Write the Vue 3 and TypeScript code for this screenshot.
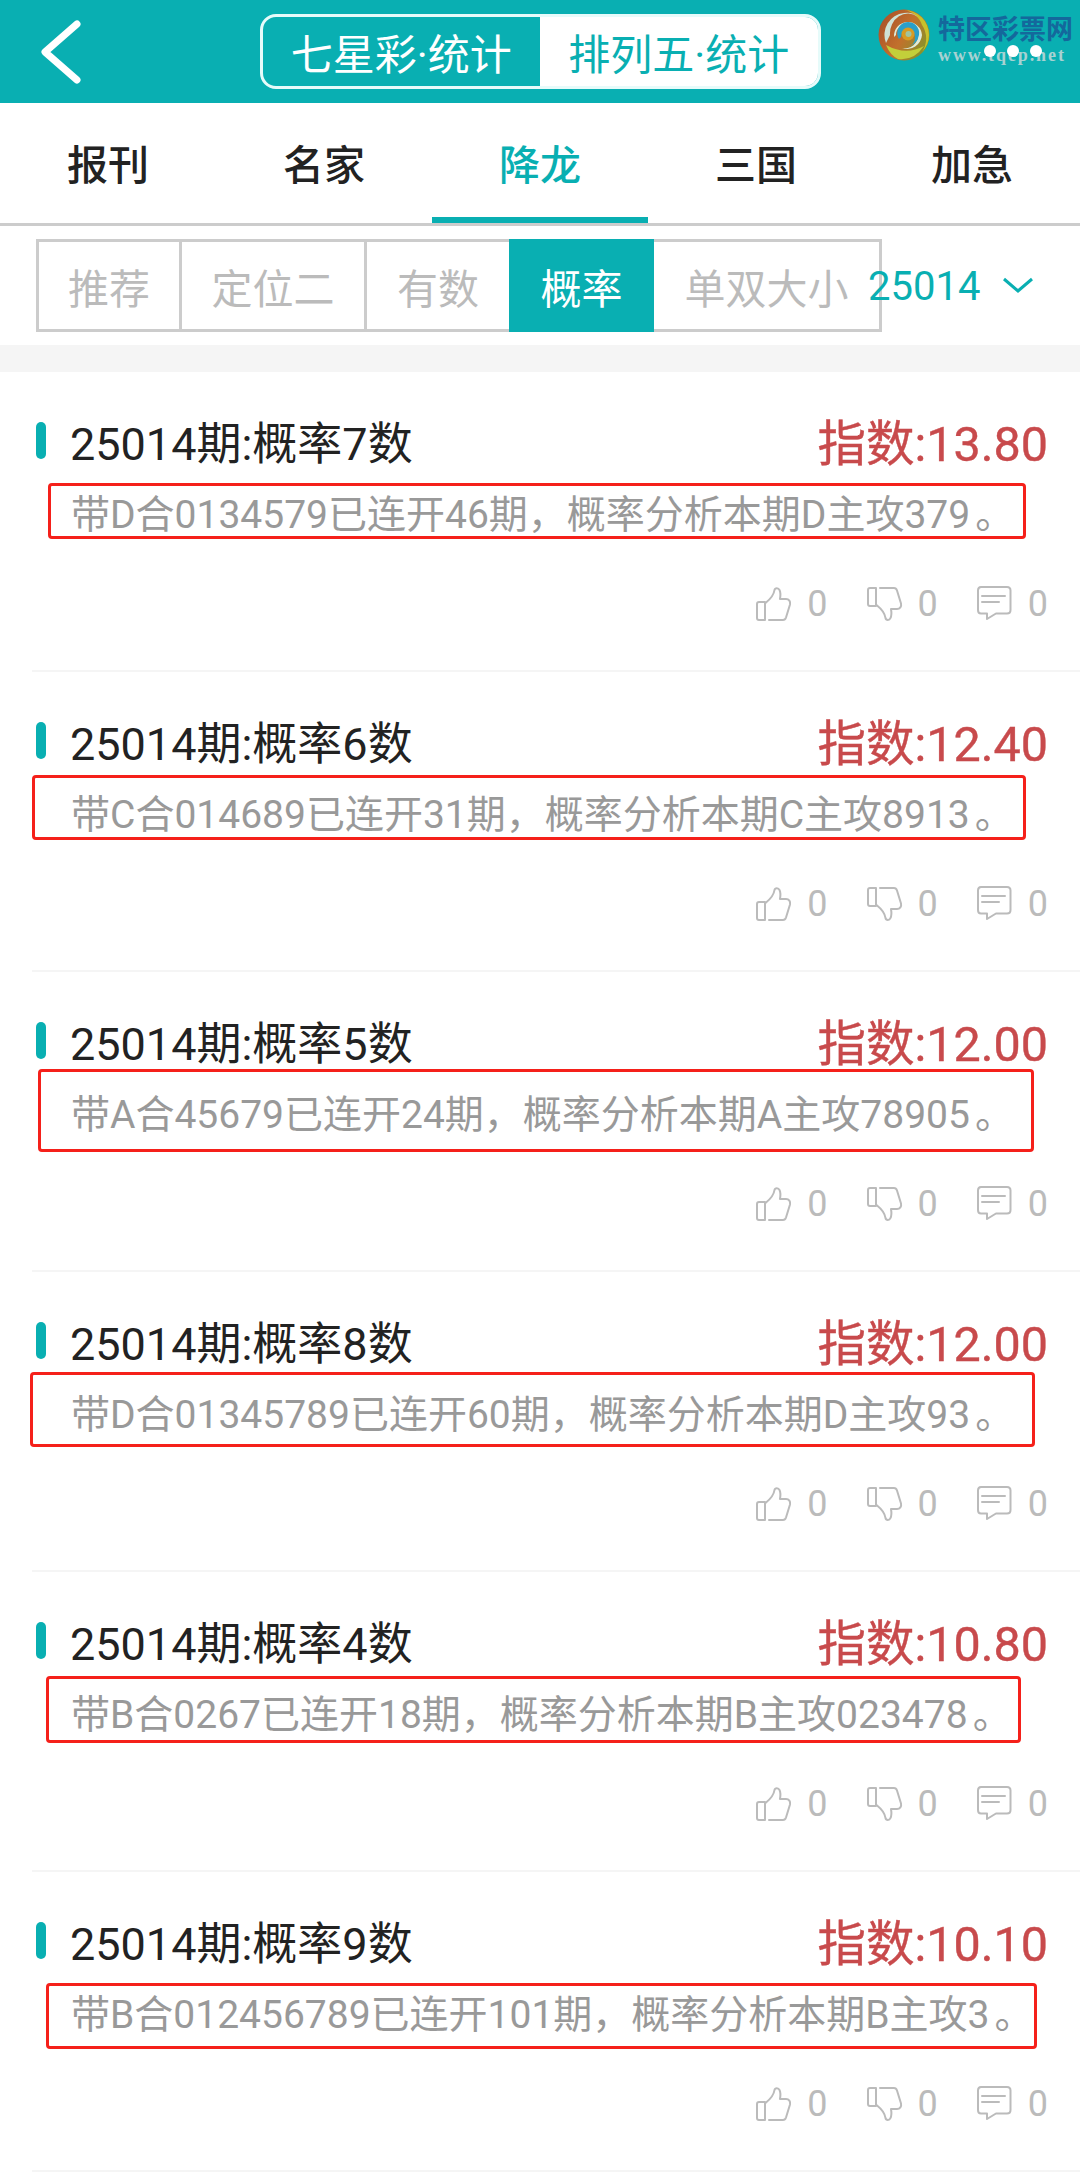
<script setup lang="ts">
interface Pick {
  count: number
  score: string
  text: string
  box: { left: number; top: number; width: number; height: number }
}

const tabs = ['报刊', '名家', '降龙', '三国', '加急']
const subTabs = [
  { label: '推荐', width: 146 },
  { label: '定位二', width: 188 },
  { label: '有数', width: 148 },
  { label: '概率', width: 145 },
  { label: '单双大小', width: 231 }
]

const picks: Pick[] = [
  { count: 7, score: '13.80', text: '带D合0134579已连开46期，概率分析本期D主攻379', box: { left: 16, top: 111, width: 978, height: 56 } },
  { count: 6, score: '12.40', text: '带C合014689已连开31期，概率分析本期C主攻8913', box: { left: 0, top: 103, width: 994, height: 65 } },
  { count: 5, score: '12.00', text: '带A合45679已连开24期，概率分析本期A主攻78905', box: { left: 6, top: 97, width: 996, height: 83 } },
  { count: 8, score: '12.00', text: '带D合01345789已连开60期，概率分析本期D主攻93', box: { left: -2, top: 100, width: 1005, height: 75 } },
  { count: 4, score: '10.80', text: '带B合0267已连开18期，概率分析本期B主攻023478', box: { left: 14, top: 104, width: 975, height: 67 } },
  { count: 9, score: '10.10', text: '带B合012456789已连开101期，概率分析本期B主攻3', box: { left: 14, top: 111, width: 991, height: 66 } }
]

function boxStyle(p: Pick) {
  return {
    left: p.box.left + 'px',
    top: p.box.top + 'px',
    width: p.box.width + 'px',
    height: p.box.height + 'px'
  }
}
</script>

<template>
  <div class="page">
    <header class="header">
      <svg class="back" width="46" height="72" viewBox="0 0 46 72">
        <path d="M39 8 L7 36 L39 64" fill="none" stroke="#fff" stroke-width="7" stroke-linecap="round" stroke-linejoin="round" />
      </svg>
      <div class="seg">
        <div class="seg-item">七星彩·统计</div>
        <div class="seg-item on">排列五·统计</div>
      </div>
      <!-- watermark logo -->
      <div class="logo">
        <svg width="52" height="52" viewBox="0 0 52 52">
          <defs>
            <linearGradient id="lg" x1="0" y1="0.2" x2="1" y2="0.8">
              <stop offset="0" stop-color="#a9512a" />
              <stop offset="0.5" stop-color="#c2702c" />
              <stop offset="1" stop-color="#7d9a2a" />
            </linearGradient>
          </defs>
          <circle cx="26" cy="26" r="25.500" fill="url(#lg)" />
          <path d="M26 1 A25 25 0 0 1 51 26 A25 25 0 0 1 44 43 A24 24 0 0 0 44 16 A22 22 0 0 0 26 1 Z" fill="#c9c12b" />
          <path d="M12 26 A18 20 0 0 1 40 8 A16 16 0 0 0 26 4 A22 22 0 0 0 8 34 Z" fill="#cfe2d6" />
          <path d="M16 28 A14 14 0 1 1 44 26 A15 15 0 0 1 24 39 A13 13 0 0 0 40 26 A11 11 0 1 0 18 26 Z" fill="#dfead8" />
          <path d="M21 30 A11 11 0 1 1 41 26 A14 14 0 0 1 28 38 A9 9 0 0 0 37 28 A7 7 0 1 0 23 28 Z" fill="#2a9fc8" />
          <circle cx="30" cy="25" r="6.500" fill="#d89b22" />
          <circle cx="30.500" cy="25" r="3" fill="#9fc4a0" />
          <path d="M8 36 Q28 47 46 37 Q36 52 20 50 Q12 46 8 36 Z" fill="#c3cf3a" />
        </svg>
        <div class="logo-text">
          <div class="logo-cn">特区彩票网</div>
          <div class="logo-url">www.tqep.net</div>
        </div>
        <div class="dots"><i></i><i></i><i></i></div>
      </div>
    </header>

    <nav class="tabs">
      <div v-for="t in tabs" :key="t" class="tab" :class="{ active: t === '降龙' }">{{ t }}</div>
    </nav>

    <div class="subbar">
      <div
        v-for="s in subTabs"
        :key="s.label"
        class="sub"
        :class="{ active: s.label === '概率' }"
        :style="{ width: s.width + 'px' }"
      >{{ s.label }}</div>
      <div class="issue">
        25014
        <svg width="32" height="16" viewBox="0 0 32 16" class="chev">
          <path d="M2 2 L16 14 L30 2" fill="none" stroke="#09afb2" stroke-width="3" />
        </svg>
      </div>
    </div>

    <div class="band"></div>

    <div class="list">
      <article v-for="p in picks" :key="p.count" class="item">
        <div class="head">
          <span class="bar"></span>
          <h3 class="title">25014期:概率{{ p.count }}数</h3>
          <span class="score">指数:{{ p.score }}</span>
        </div>
        <p class="desc">{{ p.text }}<span class="stop">。</span></p>
        <div class="stats">
          <span class="stat">
            <svg width="36" height="36" viewBox="0 0 36 36" class="ico">
              <path d="M13 34H27c1.500 0 2.500-1 3-2.500l4-13c.7-3-1-5.500-4-5.500h-6c.5-3 .5-7-.5-9-1-2.500-4.500-2.500-5 0-.5 4-4 9-9 13" />
              <path d="M9 16H3c-1.300 0-2 1-2 2v14c0 1.200 1 2 2 2h6V16z" />
            </svg>
            0
          </span>
          <span class="stat">
            <svg width="36" height="36" viewBox="0 0 36 36" class="ico flip">
              <path d="M13 34H27c1.500 0 2.500-1 3-2.500l4-13c.7-3-1-5.500-4-5.500h-6c.5-3 .5-7-.5-9-1-2.500-4.500-2.500-5 0-.5 4-4 9-9 13" />
              <path d="M9 16H3c-1.300 0-2 1-2 2v14c0 1.200 1 2 2 2h6V16z" />
            </svg>
            0
          </span>
          <span class="stat">
            <svg width="36" height="36" viewBox="0 0 36 36" class="ico">
              <path d="M4 1H30c2 0 3.500 1.500 3.500 3.500V24c0 2-1.500 3.500-3.500 3.500H19L10 33V27.500H4C2 27.500 1 26 1 24V4.500C1 2.500 2 1 4 1z" />
              <path d="M5 10H28M5 16H22" />
            </svg>
            0
          </span>
        </div>
        <div class="mark" :style="boxStyle(p)"></div>
      </article>
    </div>
  </div>
</template>

<style>
body {
  background: #fff;
}
</style>

<style scoped>
.page {
  width: 1080px;
  font-family: Roboto, "Noto Sans CJK SC", sans-serif;
  background: #fff;
  overflow: hidden;
}

.header {
  position: relative;
  height: 103px;
  background: #09afb2;
  display: flex;
  justify-content: center;
  align-items: flex-start;
  padding-top: 14px;
  box-sizing: border-box;
}

.back {
  position: absolute;
  left: 38px;
  top: 16px;
}

.seg {
  display: flex;
  width: 561px;
  height: 75px;
  box-sizing: border-box;
  border: 3px solid #e6fbfa;
  border-radius: 16px;
  overflow: hidden;
}

.seg-item {
  flex: 1;
  display: flex;
  align-items: center;
  justify-content: center;
  font-size: 42px;
  color: #fff;
}

.seg-item.on {
  background: #fff;
  color: #09afb2;
}

.logo {
  position: absolute;
  left: 878px;
  top: 9px;
  display: flex;
  gap: 8px;
}

.logo-cn {
  font-size: 27px;
  font-weight: 700;
  line-height: 30px;
  margin-top: 6px;
  color: #14689c;
  white-space: nowrap;
}

.logo-url {
  font-family: "Liberation Serif", serif;
  font-size: 18px;
  font-weight: 700;
  line-height: 20px;
  letter-spacing: 1.900px;
  color: #a9d2d2;
  white-space: nowrap;
}

.dots {
  position: absolute;
  left: 106px;
  top: 36px;
  display: flex;
  gap: 11px;
}

.dots i {
  width: 12px;
  height: 12px;
  border-radius: 50%;
  background: #fff;
}

.tabs {
  display: flex;
  height: 123px;
  box-sizing: border-box;
  border-bottom: 3px solid #ccc;
}

.tab {
  flex: 1;
  display: flex;
  align-items: center;
  justify-content: center;
  padding-top: 4px;
  font-size: 41px;
  font-weight: 500;
  color: #222;
  border-bottom: 6px solid transparent;
}

.tab.active {
  color: #09afb2;
  border-bottom-color: #09afb2;
}

.subbar {
  position: relative;
  display: flex;
  height: 119px;
  box-sizing: border-box;
  padding: 13px 0 0 36px;
}

.sub {
  height: 93px;
  box-sizing: border-box;
  border: 3px solid #ccc;
  margin-right: -3px;
  display: flex;
  align-items: center;
  justify-content: center;
  font-size: 41px;
  color: #bbb;
  white-space: nowrap;
}

.sub.active {
  background: #09afb2;
  border-color: #09afb2;
  color: #fff;
  position: relative;
}

.issue {
  position: absolute;
  left: 868px;
  top: 14px;
  height: 93px;
  display: flex;
  align-items: center;
  gap: 22px;
  font-size: 40px;
  color: #09afb2;
}

.chev {
  margin-top: -4px;
}

.band {
  height: 27px;
  background: #f5f5f5;
}

.item {
  position: relative;
  height: 300px;
  box-sizing: border-box;
  margin-left: 32px;
  padding: 45px 32px 0 4px;
  border-bottom: 2px solid #f5f5f5;
}

.head {
  display: flex;
  align-items: center;
  height: 46px;
}

.bar {
  width: 10px;
  height: 37px;
  border-radius: 5px;
  background: #09afb2;
  margin-right: 24px;
}

.title {
  margin: 0;
  flex: 1;
  font-size: 45px;
  font-weight: 400;
  color: #222;
}

.score {
  font-size: 48.500px;
  font-weight: 400;
  -webkit-text-stroke: 0.400px #c84a4c;
  color: #c84a4c;
}

.desc {
  margin: 29px 0 0;
  padding-left: 35px;
  font-size: 39px;
  line-height: 46px;
  color: #999;
  white-space: nowrap;
}

.stop {
  margin-left: 5px;
}

.stats {
  margin-top: 46px;
  display: flex;
  justify-content: flex-end;
  gap: 39px;
  height: 40px;
}

.stat {
  display: flex;
  align-items: center;
  gap: 15px;
  font-size: 36px;
  color: #bbb;
}

.ico {
  fill: none;
  stroke: #bbb;
  stroke-width: 2;
  stroke-linejoin: round;
  stroke-linecap: round;
}

.flip {
  transform: scaleY(-1);
}

.mark {
  position: absolute;
  box-sizing: border-box;
  border: 3px solid #f5201a;
  border-radius: 4px;
}
</style>
